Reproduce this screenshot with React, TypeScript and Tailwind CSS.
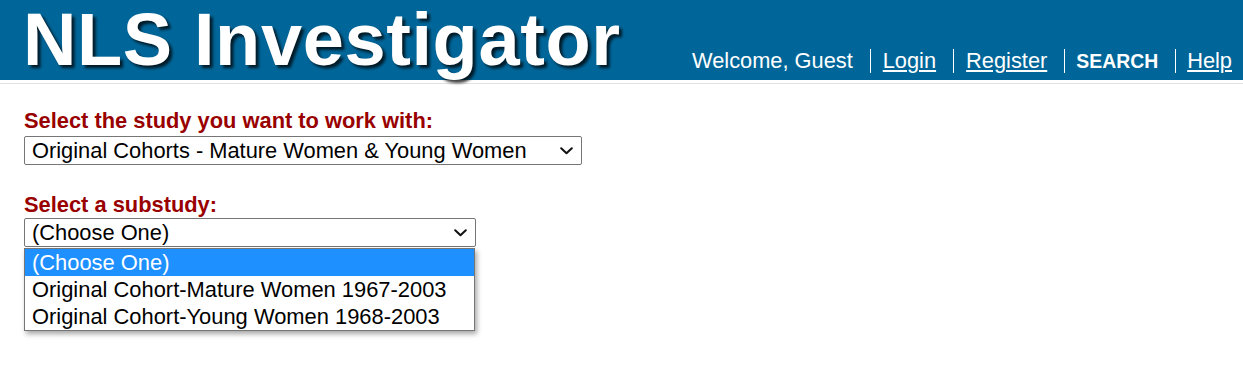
import React from "react";

function Chevron() {
  return (
    <svg width="13" height="8" viewBox="0 0 13 8" className="shrink-0">
      <path d="M1.2 1.2 L6.5 6.3 L11.8 1.2" fill="none" stroke="#111" strokeWidth="2" strokeLinecap="round" strokeLinejoin="round" />
    </svg>
  );
}

export default function App() {
  const font = "font-['Liberation_Sans',Arial,Helvetica,sans-serif]";
  return (
    <div className={`${font} w-[1243px] h-[371px] bg-white overflow-hidden`}>
      <header className="h-[80px] bg-[#006699] flex justify-between items-start">
        <div
          className="pl-[23px] mt-[-3px] text-[74px] leading-[86px] h-[86px] font-bold text-white whitespace-nowrap tracking-[0.6px]"
          style={{ textShadow: "3px 3px 3px rgba(0,0,0,0.75)" }}
        >
          NLS Investigator
        </div>
        <nav className="mt-[49px] pr-[11px] flex items-center text-white text-[21.8px] leading-[24px] whitespace-nowrap">
          <span className="pr-[17px]">Welcome, Guest</span>
          <a className="border-l border-white pl-[12px] pr-[17px] underline underline-offset-[2px]">Login</a>
          <a className="border-l border-white pl-[12px] pr-[17px] underline underline-offset-[2px]">Register</a>
          <span className="border-l border-white pl-[11px] pr-[17px] font-bold text-[19.4px]">SEARCH</span>
          <a className="border-l border-white pl-[11px] underline underline-offset-[2px]">Help</a>
        </nav>
      </header>
      <div className="mt-[3px] h-px bg-[#e2e2e2]" />
      <main className="pl-[24px] pt-[24px]">
        <div className="text-[21.85px] leading-[25px] font-bold text-[#990000]">
          Select the study you want to work with:
        </div>
        <div className="mt-[3px] w-[558px] h-[29px] border border-[#767676] rounded-[2px] flex items-center justify-between pl-[7px] pr-[8px] text-[21.85px] text-black">
          <span className="leading-[25px]">Original Cohorts - Mature Women &amp; Young Women</span>
          <Chevron />
        </div>
        <div className="mt-[27px] text-[21.85px] leading-[25px] font-bold text-[#990000]">
          Select a substudy:
        </div>
        <div className="relative mt-[1px] w-[452px]">
          <div className="w-[452px] h-[29px] border border-[#767676] rounded-[2px] flex items-center justify-between pl-[7px] pr-[8px] text-[21.85px] text-black">
            <span className="leading-[25px]">(Choose One)</span>
            <Chevron />
          </div>
          <ul className="absolute left-0 top-[30px] w-[451px] border border-[#767676] bg-white shadow-[2px_3px_5px_rgba(0,0,0,0.35)] text-[21.9px] text-black">
            <li className="h-[27px] leading-[27px] pl-[7px] bg-[#1e90ff] text-white">(Choose One)</li>
            <li className="h-[27px] leading-[27px] pl-[7px]">Original Cohort-Mature Women 1967-2003</li>
            <li className="h-[27px] leading-[27px] pl-[7px]">Original Cohort-Young Women 1968-2003</li>
          </ul>
        </div>
      </main>
    </div>
  );
}
